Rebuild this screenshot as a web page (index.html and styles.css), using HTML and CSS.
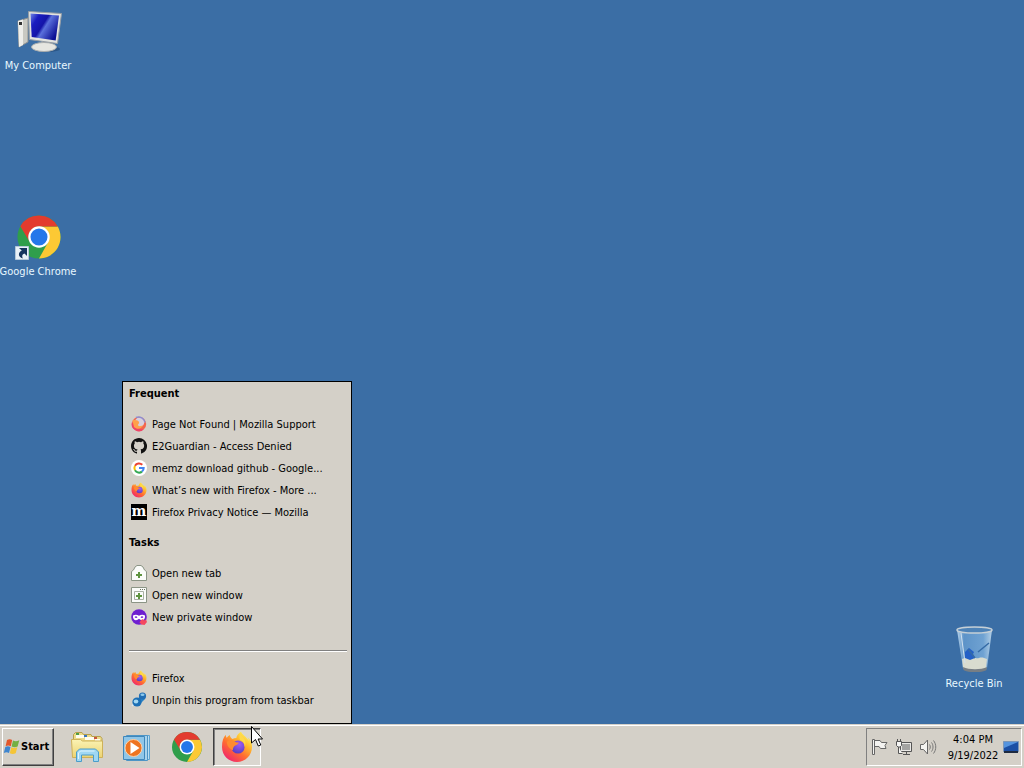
FILE: index.html
```html
<!DOCTYPE html>
<html lang="en">
<head>
    <meta charset="UTF-8">
    <meta name="viewport" content="width=device-width, initial-scale=1.0">
    <title>Desktop</title>
    <link rel="stylesheet" href="styles.css">
</head>
<body>
    <!-- shared icons -->
    <svg class="defs" aria-hidden="true">
        <defs>
            <linearGradient id="foxBody" x1="0.85" y1="0.1" x2="0.2" y2="0.95">
                <stop offset="0" stop-color="#fff056"/>
                <stop offset="0.3" stop-color="#ffb52b"/>
                <stop offset="0.6" stop-color="#ff6b32"/>
                <stop offset="1" stop-color="#f0246e"/>
            </linearGradient>
            <radialGradient id="foxGlobe" cx="0.6" cy="0.3" r="0.8">
                <stop offset="0" stop-color="#a15cf5"/>
                <stop offset="1" stop-color="#4c3bbd"/>
            </radialGradient>
            <linearGradient id="screen" x1="0" y1="0" x2="1" y2="0.6">
                <stop offset="0" stop-color="#6f86e6"/>
                <stop offset="0.25" stop-color="#1a1cc0"/>
                <stop offset="0.5" stop-color="#1414a8"/>
                <stop offset="0.6" stop-color="#5a70dc"/>
                <stop offset="1" stop-color="#0c0f94"/>
            </linearGradient>
            <linearGradient id="glass" x1="0" y1="0" x2="1" y2="0">
                <stop offset="0" stop-color="#b7d3ea"/>
                <stop offset="0.2" stop-color="#5d93c8"/>
                <stop offset="0.75" stop-color="#6fa2d2"/>
                <stop offset="1" stop-color="#b3cfe6"/>
            </linearGradient>
            <linearGradient id="folder" x1="0" y1="0" x2="0" y2="1">
                <stop offset="0" stop-color="#fbf3b4"/>
                <stop offset="1" stop-color="#ecd373"/>
            </linearGradient>
        </defs>
        <symbol id="firefox" viewBox="0 0 32 32">
            <path fill="url(#foxBody)" d="M30 11c-.7-2-2-3.700-3.500-4.700.8 1.500 1.200 2.700 1.400 3.700C25.500 5.500 21.500 4.500 20 .8c-2.600 1.400-4.200 3.600-4.700 6.200-1.500.1-2.700.4-3.800 1-1.600-.9-2.500-2.200-2.700-4C7.500 4.600 6.500 5.600 5.800 6.800 5 6.200 4.900 5 5 3.800 2.400 6 1 10 1 16c0 8.500 6.700 15 15 15s15-6.700 15-15c0-1.800-.3-3.500-1-5z"/>
            <circle cx="17" cy="16" r="6.600" fill="url(#foxGlobe)"/>
            <path fill="#ff8b30" d="M5.800 11c2.600-2.600 5.700-2.300 8-.6 1.300.9 2.500 1.200 4 1.200-.4 1.900-2.200 2.300-3.500 3-1.600.9-2.600 2.600-2.400 4.600C9 18 6 15.500 5.800 11z"/>
            <path fill="#ffd84a" d="M19.300 3c-1 2-1.100 4.200-.2 6 3 .9 4.900 3.600 4.600 7 1.700-3.800.7-7.800-2-10.300z"/>
        </symbol>
        <symbol id="chrome" viewBox="0 0 48 48">
            <circle cx="24" cy="24" r="22.500" fill="#2f9e4b"/>
            <path fill="#fcc934" d="M24 13h19.600A22.500 22.500 0 0 1 24 46.500L33.500 29.500z"/>
            <path fill="#e33b2e" d="M4.500 12.750A22.500 22.500 0 0 1 43.500 13H24a11 11 0 0 0-9.500 16.500z"/>
            <circle cx="24" cy="24" r="11.200" fill="#fff"/>
            <circle cx="24" cy="24" r="8.900" fill="#2577ea"/>
        </symbol>
    </svg>

    <main class="desktop">
        <a class="shortcut computer" href="#">
            <svg viewBox="0 0 48 48">
                <path fill="#c9c9c2" stroke="#8b8f91" d="M4 15l10-3v24l-9 5z"/>
                <path fill="#eeeeea" d="M4 15l5-1.500V39l-4 2z"/>
                <path fill="#333" d="M5 16h3v3H5z"/>
                <ellipse cx="34" cy="43" rx="12" ry="3" fill="#2c5788"/>
                <path fill="#bfc3c4" d="M28 34h8l1 8H26z"/>
                <ellipse cx="30" cy="41" rx="12.500" ry="4.500" fill="#e6e6e1" stroke="#a9adae"/>
                <path fill="#e3e4e0" stroke="#969da5" d="M14.500 5.500l33 2-4 30-28-4z"/>
                <path fill="url(#screen)" d="M16.500 7.500l28.500 2-3.300 25-24-3.500z"/>
            </svg>
            <span>My Computer</span>
        </a>
        <a class="shortcut browser" href="#">
            <svg viewBox="0 0 48 48">
                <use href="#chrome" x="2" y="2" width="46" height="46"/>
                <path fill="#e9f1f7" stroke="#b4c8da" d="M1.500 34.500h13v13h-13z"/>
                <path fill="#15345e" d="M5 36h8v8l-2.500-2.500c-2.500 1-2.700 2.500-1.700 5-5-1.500-5-6-1-8z"/>
            </svg>
            <span>Google Chrome</span>
        </a>
        <a class="shortcut recycle" href="#">
            <svg viewBox="0 0 48 48">
                <path fill="url(#glass)" d="M7 6h35l-5 38c-5 4-19 4-24 0z"/>
                <path fill="#d9dccf" d="M12 35c4-2 7 0 10-1s4 1 7 0 5 0 8 1l-1 9c-5 3-19 3-23 0z"/>
                <path fill="#777e84" d="M13 43c6 3 18 3 24 0l-.5 3c-5 3-18 3-23 0z"/>
                <path fill="#2460c6" d="M15 28l4-4 5 4-1 2 2 4-5 2-5-2z"/>
                <path fill="none" stroke="#356ba6" stroke-width="1.500" d="M28 28l11-9M25 34l-7-9"/>
                <path fill="none" stroke="#d0e1ef" d="M11 9l4 30"/>
                <ellipse cx="24.500" cy="6" rx="17.500" ry="3" fill="#4d82b7" stroke="#c5cfd6" stroke-width="1.500"/>
            </svg>
            <span>Recycle Bin</span>
        </a>
    </main>

    <nav class="jump-list" aria-label="Firefox">
        <h2>Frequent</h2>
        <ul>
            <li><button>
                <svg viewBox="0 0 16 16">
                    <circle cx="8" cy="8" r="7.200" fill="#f4654c"/>
                    <path fill="#ef4467" d="M1 6a7.200 7.200 0 0 0 12 7.200C8 14 3 11 1 6z"/>
                    <circle cx="8.500" cy="6.300" r="4.800" fill="#d8d0dc"/>
                    <path fill="none" stroke="#8e8dd0" stroke-width="1.500" d="M5 1.500c4-1.500 8.500 1 9 5"/>
                    <path fill="#ffa04a" d="M1.500 4.500c3-1 6 0 6.500 1.500s-1 2-1 3 2 2 5 0c-1 4-6 5-9 2z"/>
                </svg>
                <span>Page Not Found | Mozilla Support</span>
            </button></li>
            <li><button>
                <svg viewBox="0 0 16 16">
                    <path fill="#111" d="M8 0C3.580 0 0 3.580 0 8c0 3.540 2.290 6.530 5.470 7.590.4.070.55-.17.55-.38v-1.490c-2.010.37-2.530-.49-2.690-.94-.09-.23-.48-.94-.82-1.130-.28-.15-.68-.52-.01-.53.630-.01 1.080.58 1.230.82.720 1.210 1.870.87 2.330.66.070-.52.280-.87.510-1.070-1.780-.2-3.640-.89-3.640-3.950 0-.87.310-1.590.82-2.150-.08-.2-.36-1.020.08-2.120 0 0 .67-.21 2.200.82a7.600 7.600 0 0 1 4 0c1.530-1.040 2.200-.82 2.200-.82.440 1.100.16 1.920.08 2.120.51.560.82 1.270.82 2.150 0 3.070-1.870 3.750-3.650 3.950.29.250.54.730.54 1.480v2.200c0 .21.150.46.550.38A8 8 0 0 0 8 0z"/>
                </svg>
                <span>E2Guardian - Access Denied</span>
            </button></li>
            <li><button>
                <svg viewBox="0 0 16 16">
                    <circle cx="8" cy="8" r="8" fill="#fff"/>
                    <g fill="none" stroke-width="2">
                        <path stroke="#ea4335" d="M4 5.700A4.700 4.700 0 0 1 11.300 4.700"/>
                        <path stroke="#fbbc05" d="M4 5.700a4.700 4.700 0 0 0 0 4.600"/>
                        <path stroke="#34a853" d="M4 10.300a4.700 4.700 0 0 0 7 1.300"/>
                        <path stroke="#4285f4" d="M8 8h4.700a4.700 4.700 0 0 1-1.700 3.600"/>
                    </g>
                </svg>
                <span>memz download github - Google...</span>
            </button></li>
            <li><button>
                <svg><use href="#firefox"/></svg>
                <span>What’s new with Firefox - More ...</span>
            </button></li>
            <li><button>
                <b class="moz">m</b>
                <span>Firefox Privacy Notice — Mozilla</span>
            </button></li>
        </ul>

        <h2>Tasks</h2>
        <ul>
            <li><button>
                <svg viewBox="0 0 16 16">
                    <path fill="#fbfcfa" stroke="#8b9485" d="M.5 15.500V6.500l2-1.500 1.500-3 2-1.500h4l2 1.500 1.500 3 2 1.500v9z"/>
                    <path fill="none" stroke="#5f9440" stroke-width="2" d="M8 7v6M5 10h6"/>
                </svg>
                <span>Open new tab</span>
            </button></li>
            <li><button>
                <svg viewBox="0 0 16 16">
                    <path fill="#fbfcfa" stroke="#8b9485" d="M.5.500h15v15H.5z"/>
                    <path fill="none" stroke="#a9b0a4" d="M3.500 4.500h9v8h-9z"/>
                    <path fill="#69705f" d="M9 2h1v1H9zM11 2h1v1h-1zM13 2h1v1h-1z"/>
                    <path fill="none" stroke="#5f9440" stroke-width="2" d="M8 6v6M5 9h6"/>
                </svg>
                <span>Open new window</span>
            </button></li>
            <li><button>
                <svg viewBox="0 0 16 16">
                    <circle cx="8" cy="8" r="7.800" fill="#6e1fd0"/>
                    <path fill="#fff" d="M2 6.500c2-1.200 4-1 6 .2 2-1.200 4-1.400 6-.2.300 3-1 4.700-3 4.700-1.300 0-2-.8-3-1.500-1 .7-1.700 1.500-3 1.500-2 0-3.300-1.700-3-4.700z"/>
                    <path fill="#6e1fd0" d="M3.500 8c1-1 2.200-1 3 .3-1 .9-2 .8-3-.3zM9.500 8.300c.8-1.300 2-1.300 3-.3-1 1.100-2 1.200-3 .3z"/>
                    <path fill="#f4485f" d="M10 11l2-1 1 1.500 2-1 1 2.500-2.500 3-3-.5-2-2z"/>
                </svg>
                <span>New private window</span>
            </button></li>
        </ul>

        <hr>

        <ul>
            <li><button>
                <svg><use href="#firefox"/></svg>
                <span>Firefox</span>
            </button></li>
            <li><button>
                <svg viewBox="0 0 16 16">
                    <path stroke="#dceaf3" stroke-width="1.500" d="M1 14l4-4"/>
                    <path fill="#2b83c6" d="M6 8l4-5 4 4-4 4z"/>
                    <circle cx="6" cy="10" r="4.600" fill="#1c6fb5"/>
                    <ellipse cx="5" cy="9.500" rx="2.300" ry="2" fill="#a4d8f2"/>
                    <circle cx="11.500" cy="4" r="3.600" fill="#226eb4"/>
                    <ellipse cx="11.500" cy="2.800" rx="2" ry="1.300" fill="#8cc8ec"/>
                </svg>
                <span>Unpin this program from taskbar</span>
            </button></li>
        </ul>
    </nav>

    <footer class="taskbar">
        <button class="start">
            <svg viewBox="0 0 18 18">
                <path fill="#e2572b" d="M4 2c2-1.200 3.500-1 5.200 0L7.800 8.200c-1.800-.9-3.300-1-5.200 0z"/>
                <path fill="#74b043" d="M10 2.400c2 1 3.600 1 6.300-.1l-1.700 6.200c-2 1-3.900 1-6 0z"/>
                <path fill="#3f86cf" d="M2.300 9c2-1 3.400-.9 5.200 0L6 15c-1.700-1-3.200-1-5.200 0z"/>
                <path fill="#f5c536" d="M8.300 9.300c2 1 3.900 1 6 0l-1.600 6c-2.200 1.100-3.800 1-5.900 0z"/>
            </svg>
            <span>Start</span>
        </button>

        <div class="pinned">
            <button class="app" aria-label="Windows Explorer">
                <svg viewBox="0 0 32 32">
                    <path fill="#eddb89" stroke="#b79f4c" d="M2.500 26V3.500l2-2H11l1.500 2H20l1 2h8.500l1.500 2V26z"/>
                    <path fill="#fffdf0" d="M5 4h8v3H5zM14 6h9v3h-9zM24 8h5v3h-5z"/>
                    <path fill="#4d9c46" d="M5 2h3v2H5z"/>
                    <path fill="#3a76bd" d="M13 4h3v2h-3z"/>
                    <path fill="#c9553e" d="M23 6h3v2h-3z"/>
                    <path fill="url(#folder)" stroke="#ceb158" d="M.500 8.500h9l2 1.500h20v16.500H1.500z"/>
                    <path fill="#9fd7f3" stroke="#4a9dca" d="M5.500 30.500V21l3-3h16l3 3v9.500h-5V24h-12v6.500z"/>
                    <path fill="none" stroke="#e0f5fd" d="M7.500 28v-6l2-2h14"/>
                </svg>
            </button>
            <button class="app" aria-label="Windows Media Player">
                <svg viewBox="0 0 32 32">
                    <path fill="#bcdff2" stroke="#60a4d0" d="M7.500 4.500h21v24h-21z"/>
                    <path fill="#a9d3ec" stroke="#4d95c6" d="M5.500 4.500h21v25h-21z"/>
                    <path fill="#8fc6e8" stroke="#3f87bb" d="M2.500 5.500h21v23h-21z"/>
                    <circle cx="12.500" cy="17" r="8.500" fill="#ee7421" stroke="#fbd0a8"/>
                    <path fill="#fff" d="M9.500 11l9 6-9 6z"/>
                </svg>
            </button>
            <button class="app" aria-label="Google Chrome">
                <svg><use href="#chrome"/></svg>
            </button>
            <button class="app active" aria-label="Firefox">
                <svg><use href="#firefox"/></svg>
            </button>
        </div>

        <div class="tray">
            <svg viewBox="0 0 18 18">
                <path fill="#f4f3f0" stroke="#666" d="M1.500 1.500h2v15h-2zM3.500 2.500h5.500l1.500 2H16l-2 3 1 3H9.500l-1.500-2H3.500z"/>
            </svg>
            <svg viewBox="0 0 18 18">
                <path fill="#e9e8e5" stroke="#555" d="M5.500 4.500h11v9h-11zM8 16.500h7M11.500 14v2"/>
                <path fill="#a4a4a2" d="M7 6h8v6H7z"/>
                <path fill="#f6f6f4" stroke="#555" d="M1.500 3.500h5v4l-1.500 1.500H3L1.500 7.500zM2.500 3V1M5.500 3V1M3.500 9v6.500h4"/>
            </svg>
            <svg viewBox="0 0 18 18">
                <path fill="#f4f3f0" stroke="#666" d="M1.500 6.500h3l4-4.500v14l-4-4.500h-3z"/>
                <path fill="none" stroke="#777" d="M10.500 6.500c1 1.500 1 3.500 0 5M12.500 4.500c2 2.500 2 6.500 0 9M14.500 2.500c3 4 3 9 0 13"/>
            </svg>
            <time datetime="2022-09-19T16:04"><span>4:04 PM</span><span>9/19/2022</span></time>
            <button class="show-desktop" aria-label="Show desktop">
                <svg viewBox="0 0 16 14">
                    <path fill="#1b4fa5" stroke="#7d97b8" d="M.5 1.500h15v10H.5z"/>
                    <path fill="#5594df" d="M1 2h14L1 8z"/>
                    <path fill="#1d2a40" d="M1 11h14v2H1z"/>
                </svg>
            </button>
        </div>
    </footer>

    <svg class="cursor" viewBox="0 0 12 21" aria-hidden="true">
        <path fill="#fff" stroke="#000" d="M.5.500v16.500l4-3.500 2.800 6.500 2.500-1-2.700-6h4.400z"/>
    </svg>
</body>
</html>
```

FILE: styles.css
```css
* {
    box-sizing: border-box;
}
body {
    margin: 0;
    height: 100vh;
    display: flex;
    flex-direction: column;
    position: relative;
    overflow: hidden;
    background-color: #3b6ea5;
    font-family: "DejaVu Sans Condensed", Tahoma, "DejaVu Sans", sans-serif;
    font-size: 11px;
    line-height: 16px;
    color: #000;
}
button {
    font: inherit;
    color: inherit;
    padding: 0;
    border: 0;
    background: none;
}
svg {
    display: block;
    flex: none;
}
.defs {
    position: absolute;
    width: 0;
    height: 0;
}

/* desktop */
.desktop {
    flex: 1;
    position: relative;
}
.shortcut {
    position: absolute;
    width: 76px;
    display: flex;
    flex-direction: column;
    align-items: center;
    color: #e8f8ff;
    line-height: 24px;
    text-decoration: none;
    white-space: nowrap;
}
.shortcut svg {
    width: 48px;
    height: 48px;
}
.computer {
    left: 0;
    top: 6px;
}
.browser {
    left: 0;
    top: 212px;
}
.recycle {
    right: 12px;
    bottom: 28px;
}

/* jump list */
.jump-list {
    position: absolute;
    left: 122px;
    bottom: 44px;
    width: 230px;
    padding: 0 4px 12px 6px;
    border: 1px solid #000;
    background-color: #d4d0c8;
}
.jump-list h2 {
    margin: 0 0 7px;
    font-size: 11px;
    line-height: 24px;
}
.jump-list ul {
    margin: 0 0 8px;
    padding: 0;
    list-style: none;
}
.jump-list li button {
    display: flex;
    align-items: center;
    gap: 5px;
    width: 100%;
    height: 22px;
    padding-left: 2px;
    white-space: nowrap;
}
.jump-list li span {
    padding-top: 2px;
}
.jump-list li svg {
    width: 16px;
    height: 16px;
}
.jump-list hr {
    margin: 22px 0 15px;
    border: 0;
    border-top: 1px solid #808080;
    border-bottom: 1px solid #fff;
}
.jump-list ul:last-child {
    margin-bottom: 0;
}
.moz {
    width: 16px;
    height: 16px;
    background-color: #000;
    color: #fff;
    font-family: "DejaVu Serif", serif;
    font-size: 14px;
    line-height: 14px;
    display: flex;
    justify-content: center;
}

/* taskbar */
.taskbar {
    display: flex;
    height: 44px;
    padding: 2px;
    border-top: 1px solid #d4d0c8;
    box-shadow: inset 0 1px #fff;
    background-color: #d4d0c8;
}
.start {
    display: flex;
    align-items: center;
    width: 52px;
    margin: 1px 9px 0 0;
    border: 1px solid;
    border-color: #fff #404040 #404040 #fff;
    box-shadow: inset -1px -1px #808080;
    font-weight: bold;
}
.start svg {
    width: 18px;
    height: 18px;
}
.pinned {
    display: flex;
    gap: 2px;
    margin-top: 1px;
}
.app {
    display: flex;
    align-items: center;
    justify-content: center;
    width: 48px;
}
.app svg {
    width: 32px;
    height: 32px;
}
.active {
    border: 1px solid;
    border-color: #404040 #fff #fff #404040;
    box-shadow: inset 1px 1px #808080;
    background-color: #dad7d0;
}
.tray {
    display: flex;
    align-items: center;
    margin: 1px 0 0 auto;
    padding: 0 2px 0 4px;
    border: 1px solid;
    border-color: #808080 #fff #fff #808080;
}
.tray > svg {
    width: 18px;
    height: 18px;
    margin-right: 6px;
}
.tray time {
    display: flex;
    flex-direction: column;
    align-items: center;
    width: 60px;
    padding-top: 2px;
}
.show-desktop svg {
    width: 16px;
    height: 14px;
}

.cursor {
    position: absolute;
    left: 251px;
    bottom: 21px;
    width: 12px;
    height: 21px;
}
```
